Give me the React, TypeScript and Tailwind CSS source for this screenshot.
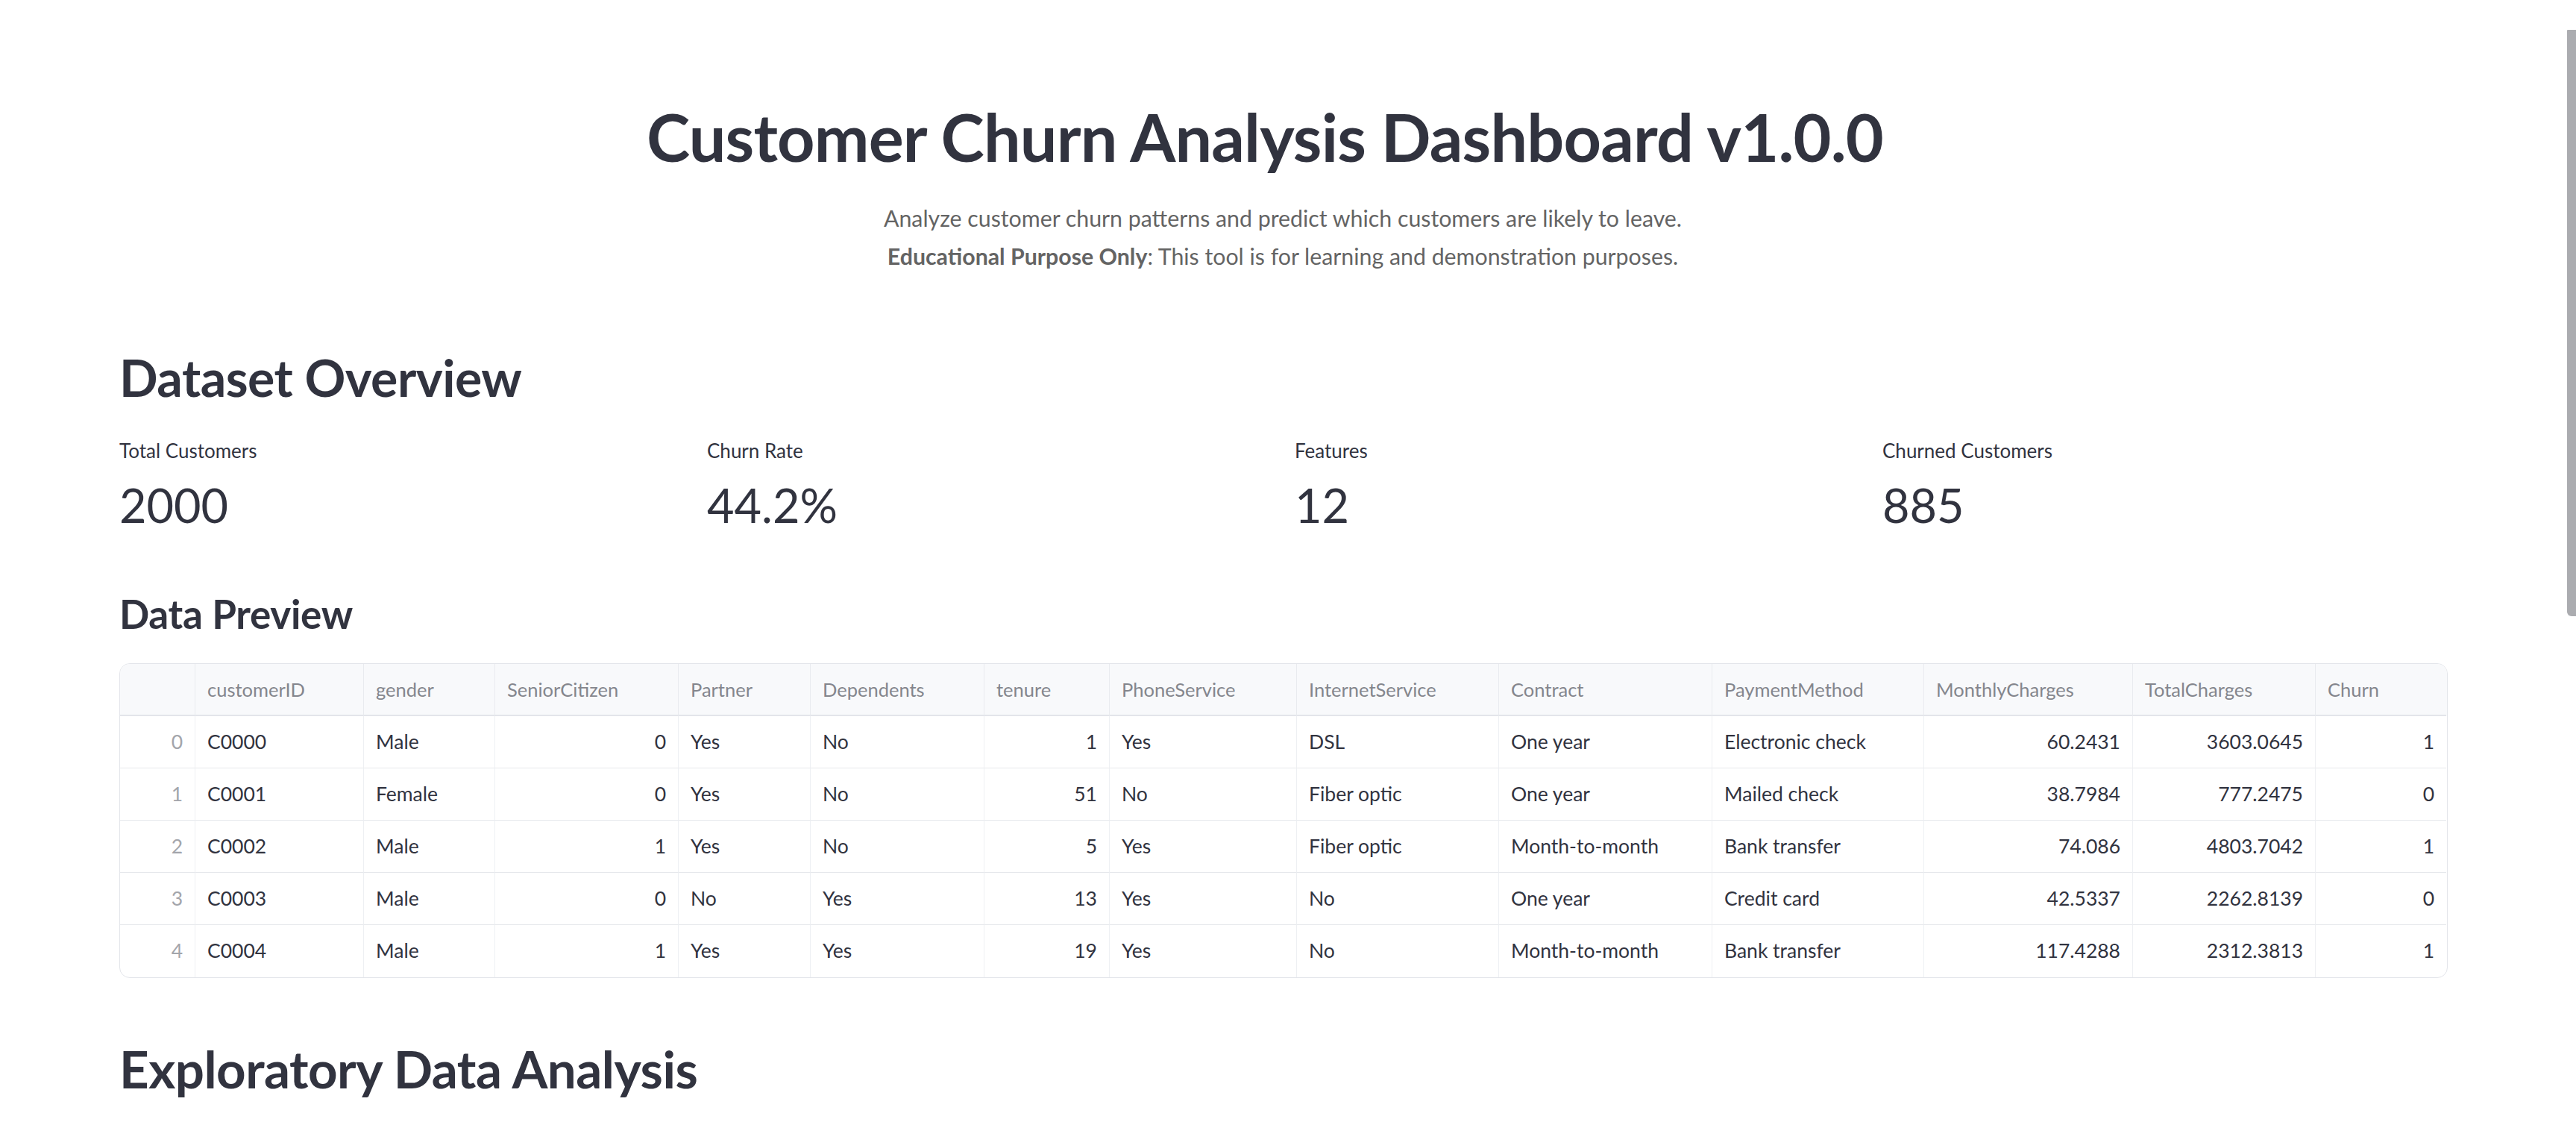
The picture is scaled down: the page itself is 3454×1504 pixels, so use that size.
import React from "react";

type Row = (string | number)[];

const headers = [
  "",
  "customerID",
  "gender",
  "SeniorCitizen",
  "Partner",
  "Dependents",
  "tenure",
  "PhoneService",
  "InternetService",
  "Contract",
  "PaymentMethod",
  "MonthlyCharges",
  "TotalCharges",
  "Churn",
];

const numeric = [true, false, false, true, false, false, true, false, false, false, false, true, true, true];

const rows: Row[] = [
  [0, "C0000", "Male", 0, "Yes", "No", 1, "Yes", "DSL", "One year", "Electronic check", "60.2431", "3603.0645", 1],
  [1, "C0001", "Female", 0, "Yes", "No", 51, "No", "Fiber optic", "One year", "Mailed check", "38.7984", "777.2475", 0],
  [2, "C0002", "Male", 1, "Yes", "No", 5, "Yes", "Fiber optic", "Month-to-month", "Bank transfer", "74.086", "4803.7042", 1],
  [3, "C0003", "Male", 0, "No", "Yes", 13, "Yes", "No", "One year", "Credit card", "42.5337", "2262.8139", 0],
  [4, "C0004", "Male", 1, "Yes", "Yes", 19, "Yes", "No", "Month-to-month", "Bank transfer", "117.4288", "2312.3813", 1],
];

const metrics = [
  { label: "Total Customers", value: "2000" },
  { label: "Churn Rate", value: "44.2%" },
  { label: "Features", value: "12" },
  { label: "Churned Customers", value: "885" },
];

const gridCols =
  "grid grid-cols-[101px_226px_176px_246px_177px_233px_168px_251px_271px_286px_284px_280px_245px_175px]";

export default function App() {
  return (
    <div className="relative min-h-[1504px] w-full overflow-hidden bg-white font-['Lato','Noto_Sans',sans-serif] text-[#31333f]">
      <div className="pl-[160px] pr-[174px] pt-[130px]">
        <h1 className="pr-[48px] text-center text-[88px] font-bold leading-[106px] tracking-[-0.8px]">
          Customer Churn Analysis Dashboard v1.0.0
        </h1>
        <div className="mt-[31px] text-center text-[30.3px] leading-[51px] text-[#646464]">
          <p>Analyze customer churn patterns and predict which customers are likely to leave.</p>
          <p>
            <span className="font-bold">Educational Purpose Only</span>: This tool is for learning and demonstration
            purposes.
          </p>
        </div>

        <h2 className="mt-[94px] text-[68px] font-bold leading-[86px] tracking-[-0.5px]">Dataset Overview</h2>

        <div className="mt-[33px] grid grid-cols-4 gap-[32px]">
          {metrics.map((m) => (
            <div key={m.label} className="flex flex-col">
              <div className="text-[26px] leading-[45px]">{m.label}</div>
              <div className="mt-[7px] text-[63px] leading-[86px]">{m.value}</div>
            </div>
          ))}
        </div>

        <h3 className="mt-[74px] text-[53px] font-bold leading-[58px] tracking-[-0.3px]">Data Preview</h3>

        <div className="mt-[37px] w-[3122px] overflow-hidden rounded-[14px] border border-[#e3e5ea]">
          <div className={`${gridCols} bg-[#f8f9fb] text-[#84868d]`}>
            {headers.map((h, i) => (
              <div
                key={i}
                className={`flex h-[70px] items-center border-b-2 border-[#e3e5ea] px-[16px] text-[25.5px] ${
                  i < headers.length - 1 ? "border-r border-r-[#e9ebef]" : ""
                }`}
              >
                {h}
              </div>
            ))}
          </div>
          {rows.map((r, ri) => (
            <div key={ri} className={gridCols}>
              {r.map((c, ci) => (
                <div
                  key={ci}
                  className={`flex h-[70px] items-center px-[16px] text-[26.5px] ${
                    numeric[ci] ? "justify-end" : "justify-start"
                  } ${ci === 0 ? "text-[#a3a5ab]" : "text-[#31333f]"} ${
                    ci < r.length - 1 ? "border-r border-r-[#eef0f3]" : ""
                  } ${ri < rows.length - 1 ? "border-b border-b-[#e6e8ec]" : ""}`}
                >
                  {c}
                </div>
              ))}
            </div>
          ))}
        </div>

        <h2 className="mt-[79px] text-[69px] font-bold leading-[86px] tracking-[-0.5px]">Exploratory Data Analysis</h2>
      </div>

      <div className="absolute right-0 top-[40px] h-[786px] w-[12px] rounded-bl-[6px] rounded-tl-[1px] bg-[#abacb0]" />
    </div>
  );
}
